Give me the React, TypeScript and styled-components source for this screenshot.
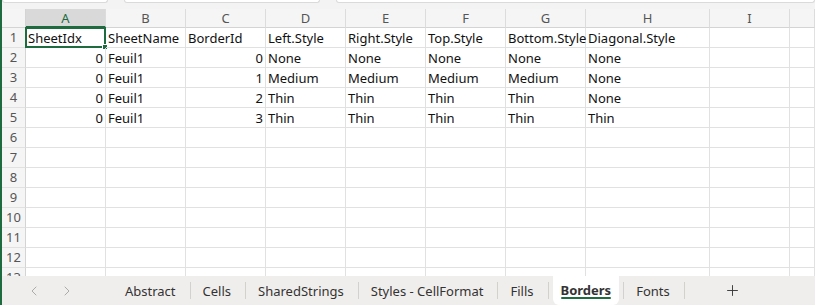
import React from 'react';
import styled, { createGlobalStyle } from 'styled-components';
import { ChevronLeft, ChevronRight, Plus } from 'lucide-react';

const columns = ['A', 'B', 'C', 'D', 'E', 'F', 'G', 'H', 'I', ''];
const numeric = [true, false, true, false, false, false, false, false, false, false];

const rows: string[][] = [
  ['SheetIdx', 'SheetName', 'BorderId', 'Left.Style', 'Right.Style', 'Top.Style', 'Bottom.Style', 'Diagonal.Style'],
  ['0', 'Feuil1', '0', 'None', 'None', 'None', 'None', 'None'],
  ['0', 'Feuil1', '1', 'Medium', 'Medium', 'Medium', 'Medium', 'None'],
  ['0', 'Feuil1', '2', 'Thin', 'Thin', 'Thin', 'Thin', 'None'],
  ['0', 'Feuil1', '3', 'Thin', 'Thin', 'Thin', 'Thin', 'Thin'],
];

const tabs = ['Abstract', 'Cells', 'SharedStrings', 'Styles - CellFormat', 'Fills', 'Borders', 'Fonts'];
const activeTab = 'Borders';

const App = (): JSX.Element => {
  const totalRows = 13;
  return (
    <>
      <GlobalStyle />
      <Window>
        <TopStrip>
          <StripBox $width={106} />
          <StripBox $width={196} />
          <StripBox $width={480} />
        </TopStrip>
        <Sheet>
          <Corner />
          {columns.map((c, i) => (
            <ColHeader key={`h${i}`} $selected={i === 0}>
              {c}
            </ColHeader>
          ))}
          {Array.from({ length: totalRows }).map((_, r) => (
            <React.Fragment key={r}>
              <RowHeader>{r + 1}</RowHeader>
              {columns.map((_, ci) => {
                const value = rows[r]?.[ci] ?? '';
                const isNum = r > 0 && numeric[ci];
                return (
                  <Cell key={ci} $numeric={isNum}>
                    {value}
                    {r === 0 && ci === 0 && (
                      <Selection>
                        <Handle />
                      </Selection>
                    )}
                  </Cell>
                );
              })}
            </React.Fragment>
          ))}
        </Sheet>
        <TabBar>
          <NavButtons>
            <ChevronLeft size={16} strokeWidth={1.3} color="#a0a0a0" />
            <ChevronRight size={16} strokeWidth={1.3} color="#a0a0a0" />
          </NavButtons>
          {tabs.map((t, i) => (
            <React.Fragment key={t}>
              {i > 0 && <TabSeparator />}
              <Tab $active={t === activeTab}>
                {t}
                {t === activeTab && <Underline />}
              </Tab>
            </React.Fragment>
          ))}
          <TabSeparator />
          <AddSheet>
            <Plus size={17} strokeWidth={1.3} color="#333" />
          </AddSheet>
        </TabBar>
      </Window>
    </>
  );
};

const GlobalStyle = createGlobalStyle`
  body {
    margin: 0;
    background: #ffffff;
    font-family: "Noto Sans", "Open Sans", sans-serif;
  }
  * {
    box-sizing: border-box;
  }
`;

const Window = styled.div`
  width: 815px;
  height: 305px;
  overflow: hidden;
  display: flex;
  flex-direction: column;
  border-left: 2px solid #1d6b3f;
  background: #ffffff;
`;

const TopStrip = styled.div`
  height: 9px;
  flex-shrink: 0;
  display: flex;
  align-items: flex-start;
  gap: 16px;
  background: #f3f3f3;
`;

const StripBox = styled.div<{ $width: number }>`
  width: ${(p) => p.$width}px;
  height: 3px;
  background: #ffffff;
  border: 1px solid #dadada;
  border-top: none;
  border-radius: 0 0 4px 4px;
`;

const Sheet = styled.div`
  flex: 1;
  overflow: hidden;
  display: grid;
  grid-template-columns: 24px repeat(7, 80px) 124px 80px 1fr;
  grid-template-rows: 19px;
  grid-auto-rows: 20px;
`;

const Corner = styled.div`
  background: #f5f5f5;
  border-right: 1px solid #d4d4d4;
  border-bottom: 1px solid #d4d4d4;
`;

const ColHeader = styled.div<{ $selected?: boolean }>`
  display: flex;
  align-items: center;
  justify-content: center;
  font-size: 13px;
  color: ${(p) => (p.$selected ? '#1e6b40' : '#555555')};
  background: ${(p) => (p.$selected ? '#d9d9d9' : '#f5f5f5')};
  border-right: 1px solid #dcdcdc;
  border-bottom: ${(p) => (p.$selected ? '2px solid #1d6b3f' : '1px solid #d4d4d4')};
`;

const RowHeader = styled.div`
  display: flex;
  align-items: center;
  justify-content: center;
  font-size: 13px;
  line-height: 19px;
  color: #555555;
  background: #f5f5f5;
  border-right: 1px solid #d4d4d4;
  border-bottom: 1px solid #e1e1e1;
  overflow: hidden;
`;

const Cell = styled.div<{ $numeric?: boolean }>`
  position: relative;
  display: flex;
  align-items: center;
  justify-content: ${(p) => (p.$numeric ? 'flex-end' : 'flex-start')};
  padding: 0 2px;
  font-size: 13px;
  color: #111111;
  white-space: nowrap;
  border-right: 1px solid #e1e1e1;
  border-bottom: 1px solid #e1e1e1;
`;

const Selection = styled.div`
  position: absolute;
  top: -1px;
  left: -1px;
  right: -1px;
  bottom: -1px;
  border: 2px solid #1d6b3f;
  pointer-events: none;
`;

const Handle = styled.div`
  position: absolute;
  right: -4px;
  bottom: -4px;
  width: 6px;
  height: 6px;
  background: #1d6b3f;
  border: 1px solid #ffffff;
`;

const TabBar = styled.div`
  height: 29px;
  flex-shrink: 0;
  display: flex;
  align-items: center;
  background: #f0eeec;
  font-size: 13px;
  color: #333333;
`;

const NavButtons = styled.div`
  display: flex;
  align-items: center;
  gap: 17px;
  padding-left: 24px;
  width: 111px;
`;

const TabSeparator = styled.div`
  width: 1px;
  height: 17px;
  background: #d3d1ce;
`;

const Tab = styled.div<{ $active?: boolean }>`
  position: relative;
  height: 100%;
  display: flex;
  align-items: center;
  padding: ${(p) => (p.$active ? '0 8px 2px' : '0 14px 0 12px')};
  margin: ${(p) => (p.$active ? '0 4px' : '0')};
  font-weight: ${(p) => (p.$active ? 700 : 400)};
  background: ${(p) => (p.$active ? '#ffffff' : 'transparent')};
  border-radius: ${(p) => (p.$active ? '0 0 6px 6px' : '0')};
  white-space: nowrap;
`;

const Underline = styled.div`
  position: absolute;
  left: 8px;
  right: 8px;
  bottom: 6px;
  height: 2px;
  border-radius: 1px;
  background: #1d6b3f;
`;

const AddSheet = styled.div`
  display: flex;
  align-items: center;
  margin-left: 39px;
`;

export default App;
